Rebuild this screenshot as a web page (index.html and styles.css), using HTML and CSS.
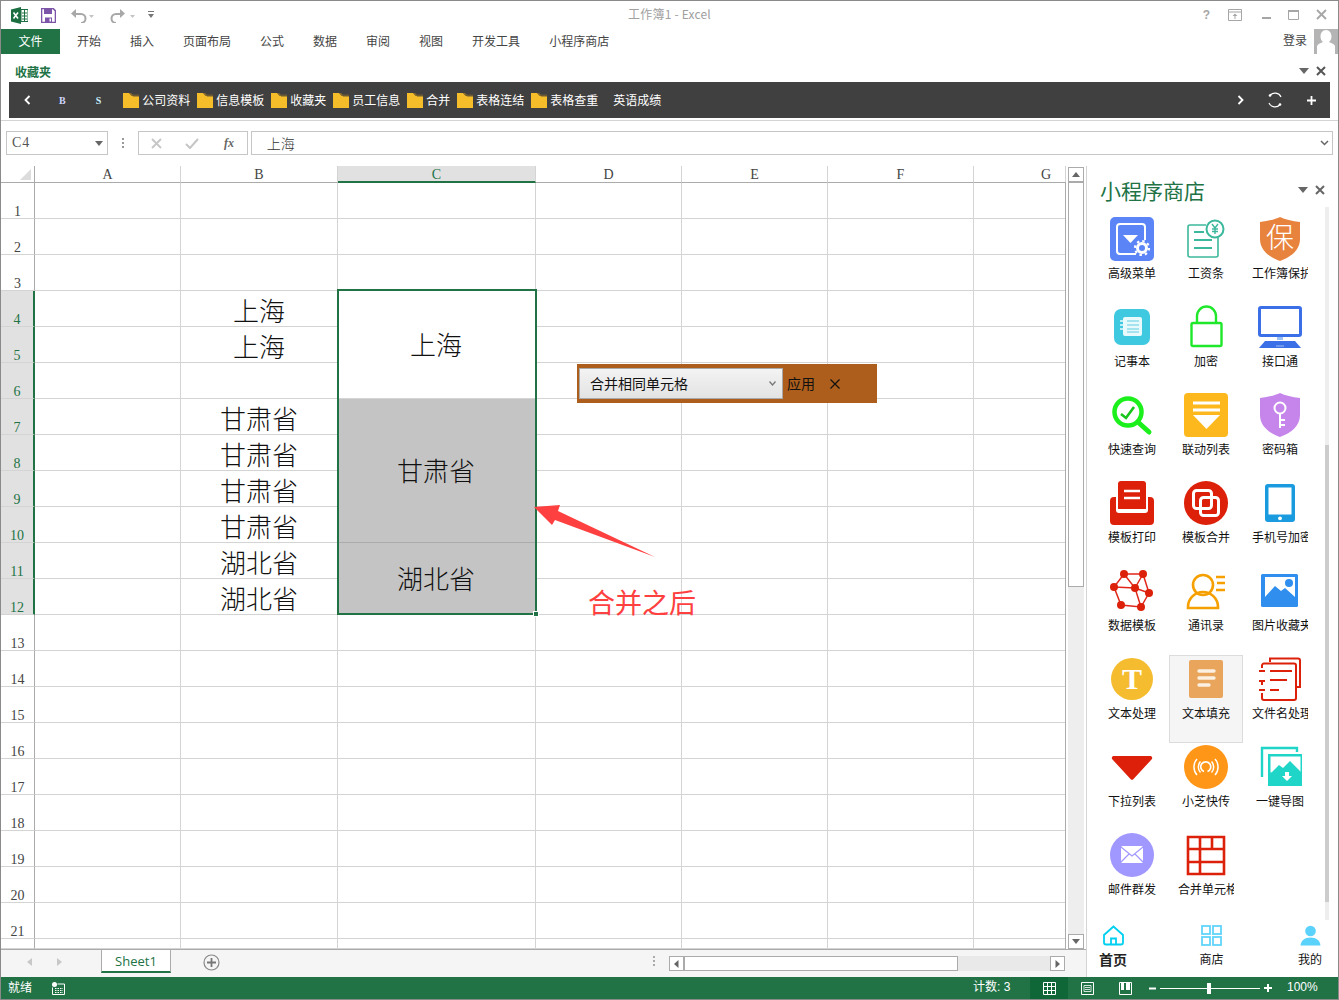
FILE: index.html
```html
<!DOCTYPE html>
<html lang="zh-CN">
<head>
<meta charset="utf-8">
<title>工作簿1 - Excel</title>
<link rel="stylesheet" href="styles.css">
</head>
<body>
<svg class="defs" width="0" height="0">
  <symbol id="folder" viewBox="0 0 16 15">
    <path d="M0 0h6l3 3h7v12H0z" fill="#f6bd2b"/>
    <path d="M6 0h2l3 3H9z" fill="#8a6d2a"/>
    <path d="M9 1.500h7V3.500H10z" fill="#6b5a34"/>
  </symbol>
</svg>
<div class="app">
  <header class="titlebar">
    <div class="qat">
      <svg class="qi-xl" width="17" height="17" viewBox="0 0 17 17"><path d="M0 2.500 10 0v17L0 14.500z" fill="#1d6f42"/><path d="M10 2.500h7v12h-7z" fill="#fff" stroke="#1d6f42"/><path d="M11 6h5M11 9h5M11 12h5M13.500 3v11" stroke="#1d6f42"/><path d="M2.500 5.500 7 11.500M7 5.500 2.500 11.500" stroke="#fff" stroke-width="1.600"/></svg>
      <svg class="qi-save" width="15" height="15" viewBox="0 0 15 15"><path d="M.5.500h11.500l2.500 2.500v11.500H.5z" fill="#fff" stroke="#7d55a8" stroke-width="1.600"/><path d="M3 1h8v5H3z" fill="#7d55a8"/><path d="M4 9.500h7v5H4z" fill="#7d55a8"/><path d="M8.500 10.500h1.500v3H8.500z" fill="#fff"/></svg>
      <svg class="qi-undo" width="26" height="15" viewBox="0 0 26 15"><path d="M3 6h7a4.500 4.500 0 0 1 0 9" fill="none" stroke="#a8a8a8" stroke-width="2"/><path d="M5 1v9L0 5.500z" fill="#a8a8a8"/><path d="M18 7h5l-2.500 3z" fill="#c4c4c4"/></svg>
      <svg class="qi-redo" width="26" height="15" viewBox="0 0 26 15"><path d="M12 6H6a4.500 4.500 0 0 0 0 9" fill="none" stroke="#a8a8a8" stroke-width="2"/><path d="M10 1v9l5-4.500z" fill="#a8a8a8"/><path d="M20 7h5l-2.500 3z" fill="#c4c4c4"/></svg>
      <svg class="qi-cust" width="6" height="8" viewBox="0 0 6 8"><path d="M0 0h6v1H0z" fill="#777"/><path d="M0 3h6L3 7z" fill="#777"/></svg>
    </div>
    <div class="doc-title">工作簿1 - Excel</div>
    <div class="winbtns">
      <span class="help">?</span>
      <svg class="qi-ribbon" width="14" height="12" viewBox="0 0 14 12"><path d="M.5.500h13v11H.5zM.5 3h13" fill="none" stroke="#a6a6a6"/><path d="M7 4.500 9.500 7h-5zM6.500 7h1v3h-1z" fill="#a6a6a6"/></svg>
      <svg width="9" height="12" viewBox="0 0 9 12"><path d="M0 8h9v2H0z" fill="#a6a6a6"/></svg>
      <svg width="11" height="12" viewBox="0 0 11 12"><path d="M.5 1.500h10v9H.5z" fill="none" stroke="#a6a6a6"/><path d="M0 1h11v2H0z" fill="#a6a6a6"/></svg>
      <svg width="11" height="11" viewBox="0 0 11 11"><path d="M1 1l9 9M10 1l-9 9" stroke="#a6a6a6" stroke-width="1.800"/></svg>
    </div>
  </header>

  <nav class="tabs">
    <div class="file-tab">文件</div>
    <ul class="tab-list">
      <li>开始</li><li>插入</li><li>页面布局</li><li>公式</li><li>数据</li><li>审阅</li><li>视图</li><li>开发工具</li><li>小程序商店</li>
    </ul>
    <div class="login">登录</div>
    <div class="avatar"><svg width="24" height="25" viewBox="0 0 24 25"><path d="M12 1c3.500 0 5.500 3 5.500 6.500 0 2.500-1 4.500-2.500 5.500 2 1 5 1.500 6 4v8H3v-8c1-2.500 4-3 6-4-1.500-1-2.500-3-2.500-5.500C6.500 4 8.500 1 12 1z" fill="#fff"/></svg></div>
  </nav>

  <section class="favorites">
    <div class="fav-head">
      <span class="fav-title">收藏夹</span>
      <span class="tri-down"></span>
      <svg class="x-ico" width="10" height="10" viewBox="0 0 10 10"><path d="M1 1l8 8M9 1L1 9" stroke="#555" stroke-width="2"/></svg>
    </div>
    <div class="fav-bar">
      <svg class="fav-back" width="7" height="10" viewBox="0 0 7 10"><path d="M5.500 1 1.500 5l4 4" fill="none" stroke="#fff" stroke-width="1.800"/></svg>
      <span class="fav-b">B</span>
      <span class="fav-s">S</span>
      <ul class="fav-items">
        <li><svg class="fld"><use href="#folder"/></svg><span>公司资料</span></li>
        <li><svg class="fld"><use href="#folder"/></svg><span>信息模板</span></li>
        <li><svg class="fld"><use href="#folder"/></svg><span>收藏夹</span></li>
        <li><svg class="fld"><use href="#folder"/></svg><span>员工信息</span></li>
        <li><svg class="fld"><use href="#folder"/></svg><span>合并</span></li>
        <li><svg class="fld"><use href="#folder"/></svg><span>表格连结</span></li>
        <li><svg class="fld"><use href="#folder"/></svg><span>表格查重</span></li>
        <li class="nofld"><span>英语成绩</span></li>
      </ul>
      <svg class="fav-next" width="7" height="10" viewBox="0 0 7 10"><path d="M1.500 1l4 4-4 4" fill="none" stroke="#fff" stroke-width="1.800"/></svg>
      <svg class="fav-refresh" width="16" height="16" viewBox="0 0 16 16"><path d="M3 3.500A6.500 6.500 0 0 1 14 5M13 12.500A6.500 6.500 0 0 1 2 11" fill="none" stroke="#fff" stroke-width="1.200"/><circle cx="3" cy="3.500" r="1.300" fill="#fff"/><circle cx="13" cy="12.500" r="1.300" fill="#fff"/></svg>
      <svg class="fav-plus" width="9" height="9" viewBox="0 0 9 9"><path d="M4.500 0v9M0 4.500h9" stroke="#fff" stroke-width="1.800"/></svg>
    </div>
  </section>

  <section class="formula">
    <div class="namebox"><span>C4</span><i class="tri-down small"></i></div>
    <div class="dots3"><b></b><b></b><b></b></div>
    <div class="fx-box">
      <svg width="11" height="11" viewBox="0 0 11 11"><path d="M1 1l9 9M10 1l-9 9" stroke="#c6c6c6" stroke-width="1.800"/></svg>
      <svg width="14" height="11" viewBox="0 0 14 11"><path d="M1 6l4 4 8-9" fill="none" stroke="#c6c6c6" stroke-width="2"/></svg>
      <span class="fx">fx</span>
    </div>
    <div class="fbar"><span>上海</span><svg width="9" height="6" viewBox="0 0 9 6"><path d="M1 1l3.500 3.500L8 1" fill="none" stroke="#666" stroke-width="1.500"/></svg></div>
  </section>

  <main class="main">
    <div class="sheet">
      <div class="sheet-top">
        <div class="grid-wrap">
          <div class="grid">
            <div class="corner"><svg width="11" height="11" viewBox="0 0 11 11"><path d="M11 0v11H0z" fill="#dcdcdc"/></svg></div>
            <div class="ch">A</div><div class="ch">B</div><div class="ch on">C</div><div class="ch">D</div><div class="ch">E</div><div class="ch">F</div><div class="ch ch-g">G</div>

            <div class="rh">1</div><i></i><i></i><i></i><i></i><i></i><i></i><i></i>
            <div class="rh">2</div><i></i><i></i><i></i><i></i><i></i><i></i><i></i>
            <div class="rh">3</div><i></i><i></i><i></i><i></i><i></i><i></i><i></i>

            <div class="rh on">4</div><i></i><div class="cell">上海</div><div class="merged m3">上海</div><i></i><i></i><i></i><i></i>
            <div class="rh on">5</div><i></i><div class="cell">上海</div><i></i><i></i><i></i><i></i>
            <div class="rh on">6</div><i></i><i></i><i></i><i></i><i></i><i></i>
            <div class="rh on">7</div><i></i><div class="cell">甘肃省</div><div class="merged m4 grey">甘肃省</div><i></i><i></i><i></i><i></i>
            <div class="rh on">8</div><i></i><div class="cell">甘肃省</div><i></i><i></i><i></i><i></i>
            <div class="rh on">9</div><i></i><div class="cell">甘肃省</div><i></i><i></i><i></i><i></i>
            <div class="rh on">10</div><i></i><div class="cell">甘肃省</div><i></i><i></i><i></i><i></i>
            <div class="rh on">11</div><i></i><div class="cell">湖北省</div><div class="merged m2 grey">湖北省</div><i></i><i></i><i></i><i></i>
            <div class="rh on">12</div><i></i><div class="cell">湖北省</div><i></i><i></i><i></i><i></i>

            <div class="rh">13</div><i></i><i></i><i></i><i></i><i></i><i></i><i></i>
            <div class="rh">14</div><i></i><i></i><i></i><i></i><i></i><i></i><i></i>
            <div class="rh">15</div><i></i><i></i><i></i><i></i><i></i><i></i><i></i>
            <div class="rh">16</div><i></i><i></i><i></i><i></i><i></i><i></i><i></i>
            <div class="rh">17</div><i></i><i></i><i></i><i></i><i></i><i></i><i></i>
            <div class="rh">18</div><i></i><i></i><i></i><i></i><i></i><i></i><i></i>
            <div class="rh">19</div><i></i><i></i><i></i><i></i><i></i><i></i><i></i>
            <div class="rh">20</div><i></i><i></i><i></i><i></i><i></i><i></i><i></i>
            <div class="rh">21</div><i></i><i></i><i></i><i></i><i></i><i></i><i></i>
            <div class="rh"></div><i></i><i></i><i></i><i></i><i></i><i></i><i></i>
          </div>

          <div class="selection"><span class="handle"></span></div>

          <div class="float-bar">
            <div class="float-select"><span>合并相同单元格</span><svg width="7" height="5" viewBox="0 0 7 5"><path d="M.5.500 3.500 4 6.500.500" fill="none" stroke="#777" stroke-width="1.300"/></svg></div>
            <span class="float-apply">应用</span>
            <svg class="float-x" width="10" height="10" viewBox="0 0 10 10"><path d="M.5.500l9 9M9.500.500l-9 9" stroke="#111" stroke-width="1.200"/></svg>
          </div>

          <svg class="arrow" width="130" height="60" viewBox="530 502 130 60"><path d="M534 507 560 505 558 511 655 557 555 520 552 525z" fill="#ff4040"/></svg>
          <div class="note">合并之后</div>
        </div>

        <div class="vscroll">
          <div class="sb-btn"><i class="tri-up"></i></div>
          <div class="sb-thumb"></div>
          <div class="sb-track"></div>
          <div class="sb-btn"><i class="tri-down small"></i></div>
        </div>
      </div>

      <div class="tabbar">
        <div class="sheet-nav">
          <svg width="6" height="8" viewBox="0 0 6 8"><path d="M5 0v8L0 4z" fill="#c8c8c8"/></svg>
          <svg width="6" height="8" viewBox="0 0 6 8"><path d="M1 0v8l5-4z" fill="#c8c8c8"/></svg>
        </div>
        <div class="sheet-tab">Sheet1</div>
        <svg class="add-sheet" width="17" height="17" viewBox="0 0 17 17"><circle cx="8.500" cy="8.500" r="7.500" fill="none" stroke="#888" stroke-width="1.200"/><path d="M8.500 4v9M4 8.500h9" stroke="#777" stroke-width="1.800"/></svg>
        <div class="vdots"><b></b><b></b><b></b></div>
        <div class="hscroll">
          <div class="hs-btn"><svg width="5" height="8" viewBox="0 0 5 8"><path d="M4.500 0v8L0 4z" fill="#666"/></svg></div>
          <div class="hs-thumb"></div>
          <div class="hs-track"></div>
          <div class="hs-btn"><svg width="5" height="8" viewBox="0 0 5 8"><path d="M.5 0v8L5 4z" fill="#666"/></svg></div>
        </div>
      </div>
    </div>

    <aside class="panel">
      <div class="panel-head">
        <h2>小程序商店</h2>
        <span class="tri-down"></span>
        <svg class="x-ico" width="10" height="10" viewBox="0 0 10 10"><path d="M1 1l8 8M9 1L1 9" stroke="#666" stroke-width="2"/></svg>
      </div>
      <div class="panel-body">
        <div class="apps">
          <div class="app-item"><svg class="ico" viewBox="0 0 44 44"><rect width="44" height="44" rx="5" fill="#5b85f7"/><path d="M26 37H10a3 3 0 0 1-3-3V10a3 3 0 0 1 3-3h22a3 3 0 0 1 3 3v13" fill="none" stroke="#fff" stroke-width="2"/><path d="M13 18h15l-7.500 8z" fill="#fff"/><circle cx="32" cy="31" r="4.500" fill="none" stroke="#fff" stroke-width="3"/><circle cx="32" cy="31" r="7" fill="none" stroke="#fff" stroke-width="2.200" stroke-dasharray="2.500 3"/></svg><span>高级菜单</span></div>
          <div class="app-item"><svg class="ico" viewBox="0 0 44 44"><path d="M22 8H6a2 2 0 0 0-2 2v28a2 2 0 0 0 2 2h26a2 2 0 0 0 2-2V21" fill="none" stroke="#3cb89c" stroke-width="1.600"/><path d="M10 15h10M10 23h18M10 31h18" stroke="#3cb89c" stroke-width="2"/><circle cx="31" cy="12" r="8.500" fill="#fff" stroke="#3cb89c" stroke-width="2"/><path d="M28 7l3 4 3-4M31 11v6M28 12h6M28 14.500h6" fill="none" stroke="#3cb89c" stroke-width="1.400"/></svg><span>工资条</span></div>
          <div class="app-item"><svg class="ico" viewBox="0 0 44 44"><path d="M22 0c5 2.500 12 4 20 5v17c0 11-9 18-20 22C11 40 2 33 2 22V5c8-1 15-2.500 20-5z" fill="#e8833e"/><text x="22" y="31" class="ico-txt">保</text></svg><span>工作簿保护</span></div>

          <div class="app-item"><svg class="ico" viewBox="0 0 44 44"><rect x="4" y="4" width="36" height="36" rx="7" fill="#3fc9e0"/><rect x="13" y="12" width="19" height="19" rx="2" fill="#e9fafd"/><path d="M10 16h3M10 20h3M10 24h3" stroke="#e9fafd" stroke-width="1.600"/><path d="M17 16h12M17 20h12M17 24h12M17 27h12" stroke="#8fdbea" stroke-width="1.600"/></svg><span>记事本</span></div>
          <div class="app-item"><svg class="ico" viewBox="0 0 44 44"><rect x="7.500" y="18" width="30" height="23" rx="1.500" fill="#fff" stroke="#1fe82a" stroke-width="2.400"/><path d="M13 18v-7a9.500 9.500 0 0 1 19 0v7" fill="none" stroke="#1fe82a" stroke-width="2.400"/></svg><span>加密</span></div>
          <div class="app-item"><svg class="ico" viewBox="0 0 44 44"><rect x="1.500" y="2.500" width="41" height="28" rx="1.500" fill="#fff" stroke="#3a6fe8" stroke-width="3"/><path d="M19 32h6v3h-6z" fill="#9fc0f2"/><path d="M7 36h30l6 7H1z" fill="#3a6fe8"/><path d="M18 41h8" stroke="#9fc0f2"/></svg><span>接口通</span></div>

          <div class="app-item"><svg class="ico" viewBox="0 0 44 44"><circle cx="18" cy="19" r="13.500" fill="none" stroke="#1cf01c" stroke-width="4.500"/><path d="M29 30l10 9" stroke="#1cf01c" stroke-width="5" stroke-linecap="round"/><path d="M11 21l5 4 8-11" fill="none" stroke="#19c41c" stroke-width="2.600"/></svg><span>快速查询</span></div>
          <div class="app-item"><svg class="ico" viewBox="0 0 44 44"><rect width="44" height="44" rx="4" fill="#fdb81e"/><path d="M9 10h27M9 17h27" stroke="#fff" stroke-width="3"/><path d="M9 22h27L22.500 36z" fill="#fff"/></svg><span>联动列表</span></div>
          <div class="app-item"><svg class="ico" viewBox="0 0 44 44"><path d="M22 0c5 2.500 12 4 20 5v17c0 11-9 18-20 22C11 40 2 33 2 22V5c8-1 15-2.500 20-5z" fill="#c685ea"/><circle cx="22" cy="15" r="5.500" fill="none" stroke="#fff" stroke-width="2"/><path d="M22 20v15M22 27h5M22 32h5" stroke="#fff" stroke-width="2"/></svg><span>密码箱</span></div>

          <div class="app-item"><svg class="ico" viewBox="0 0 44 44"><path d="M11 0h22a3 3 0 0 1 3 3v25H8V3a3 3 0 0 1 3-3z" fill="#dc2009"/><path d="M0 20a4 4 0 0 1 4-4h2v13a3 3 0 0 0 3 3h26a3 3 0 0 0 3-3V16h2a4 4 0 0 1 4 4v20a4 4 0 0 1-4 4H4a4 4 0 0 1-4-4z" fill="#dc2009"/><path d="M14 10h16M14 17h16" stroke="#fff" stroke-width="2.400"/></svg><span>模板打印</span></div>
          <div class="app-item"><svg class="ico" viewBox="0 0 44 44"><circle cx="22" cy="22" r="22" fill="#dc2009"/><rect x="9.500" y="9.500" width="18" height="18" rx="3" fill="none" stroke="#fff" stroke-width="3"/><rect x="16.500" y="16.500" width="18" height="18" rx="3" fill="none" stroke="#fff" stroke-width="3"/></svg><span>模板合并</span></div>
          <div class="app-item"><svg class="ico" viewBox="0 0 44 44"><rect x="7" y="3" width="30" height="38" rx="3" fill="#1a9be0"/><rect x="10.500" y="6.500" width="23" height="27" fill="#fff"/><circle cx="22" cy="37.300" r="1.900" fill="#fff"/></svg><span>手机号加密</span></div>

          <div class="app-item"><svg class="ico" viewBox="0 0 44 44"><path d="M14 5 33 5 39 24 31 38 11 36 4 18zM4 18 25 19 39 24M14 5 25 19 31 38M33 5 25 19" fill="none" stroke="#e0271a" stroke-width="1.500"/><g fill="#dc2009"><circle cx="14" cy="5" r="4"/><circle cx="33" cy="5" r="4"/><circle cx="4" cy="18" r="4"/><circle cx="25" cy="19" r="4"/><circle cx="39" cy="24" r="4"/><circle cx="11" cy="36" r="4"/><circle cx="31" cy="38" r="4"/></g></svg><span>数据模板</span></div>
          <div class="app-item"><svg class="ico" viewBox="0 0 44 44"><circle cx="19" cy="16" r="10" fill="none" stroke="#f5a000" stroke-width="2.600"/><path d="M4 39v-1a15 15 0 0 1 30 0v1z" fill="none" stroke="#f5a000" stroke-width="2.600"/><path d="M32 8h9M33 14h8M32 21h9" stroke="#f5a000" stroke-width="2.600"/></svg><span>通讯录</span></div>
          <div class="app-item"><svg class="ico" viewBox="0 0 44 44"><rect x="3" y="5" width="37" height="33" rx="1.500" fill="#2f8eee"/><path d="M7 8h30v20L27 19l-4 3-6-5L7 28z" fill="#fff"/><circle cx="31" cy="14" r="4" fill="#2f8eee"/></svg><span>图片收藏夹</span></div>

          <div class="app-item"><svg class="ico" viewBox="0 0 44 44"><circle cx="22" cy="22" r="21" fill="#f4bc2e"/><text x="22" y="32" class="ico-t">T</text></svg><span>文本处理</span></div>
          <div class="app-item selected"><svg class="ico" viewBox="0 0 44 44"><rect x="5" y="3" width="34" height="38" rx="2" fill="#e8a55b"/><path d="M15 14h15M15 21h15M15 28h10" stroke="#fbf0e2" stroke-width="3.400" stroke-linecap="round"/></svg><span>文本填充</span></div>
          <div class="app-item"><svg class="ico" viewBox="0 0 44 44"><path d="M12 5V1.500h28a2 2 0 0 1 2 2V30h-4" fill="none" stroke="#dc2009" stroke-width="2"/><path d="M4 11V8.500a2 2 0 0 1 2-2h30a2 2 0 0 1 2 2V41a2 2 0 0 1-2 2H6a2 2 0 0 1-2-2V36M4 24v4" fill="none" stroke="#dc2009" stroke-width="2"/><path d="M1 14h6M1 24h6M1 33h6" stroke="#dc2009" stroke-width="2"/><path d="M12 14h22M12 23h17M12 33h9" stroke="#dc2009" stroke-width="2.200"/></svg><span>文件名处理</span></div>

          <div class="app-item"><svg class="ico" viewBox="0 0 44 44"><path d="M4 11h36a2 2 0 0 1 1.500 3.500L23.500 34a2 2 0 0 1-3 0L2.500 14.500A2 2 0 0 1 4 11z" fill="#dc2009"/></svg><span>下拉列表</span></div>
          <div class="app-item"><svg class="ico" viewBox="0 0 44 44"><circle cx="22" cy="22" r="22" fill="#ff9617"/><path d="M23.500 26.500a5 5 0 1 0-3.500 0" fill="none" stroke="#fff" stroke-width="1.700"/><path d="M13 14a12 12 0 0 0 0 16M31 14a12 12 0 0 1 0 16M16.500 16.500a8 8 0 0 0 0 11M27.500 16.500a8 8 0 0 1 0 11" fill="none" stroke="#fff" stroke-width="1.500"/></svg><span>小芝快传</span></div>
          <div class="app-item"><svg class="ico" viewBox="0 0 44 44"><path d="M4 32V3h35v4" fill="none" stroke="#1fd5c8" stroke-width="2.400"/><rect x="10" y="9" width="35" height="32" fill="#1fd5c8"/><rect x="12.500" y="11.500" width="30" height="16" fill="#fff"/><path d="M12 29l9-9 4 3 7-7 11 11v4H12z" fill="#1fd5c8"/><path d="M27 27h4v4h3l-5 5-5-5h3z" fill="#fff"/></svg><span>一键导图</span></div>

          <div class="app-item"><svg class="ico" viewBox="0 0 44 44"><circle cx="22" cy="22" r="22" fill="#a097ff"/><rect x="11" y="13" width="22" height="17" rx="1.500" fill="#fff"/><path d="M11 14l11 9 11-9M11 29l8-8M33 29l-8-8" fill="none" stroke="#a097ff" stroke-width="1.200"/></svg><span>邮件群发</span></div>
          <div class="app-item"><svg class="ico" viewBox="0 0 44 44"><path d="M4 4h36v37H4zM4 16h36M4 29h36M16 4v37M28 4v12" fill="none" stroke="#dc2009" stroke-width="2.600"/></svg><span>合并单元格</span></div>
        </div>
        <div class="panel-scroll"><div class="panel-thumb"></div></div>
      </div>
      <div class="panel-nav">
        <div class="nav-item active"><svg width="21" height="21" viewBox="0 0 21 21"><path d="M10.500 1.500 1 10v7.500A2 2 0 0 0 3 19.500h15a2 2 0 0 0 2-2V10z" fill="none" stroke="#00d0f0" stroke-width="1.800"/><path d="M8 19.500V13.500h5v6" fill="none" stroke="#00d0f0" stroke-width="1.800"/></svg><span>首页</span></div>
        <div class="nav-item"><svg width="21" height="21" viewBox="0 0 21 21"><g fill="none" stroke="#60d4fb" stroke-width="1.800"><rect x="1" y="1" width="8" height="8"/><rect x="12" y="1" width="8" height="8"/><rect x="1" y="12" width="8" height="8"/><rect x="12" y="12" width="8" height="8"/></g></svg><span>商店</span></div>
        <div class="nav-item"><svg width="21" height="21" viewBox="0 0 21 21"><circle cx="10.500" cy="6" r="5.300" fill="#5ad2fb"/><path d="M.500 20.500c.5-5 4-8 10-8s9.500 3 10 8z" fill="#5ad2fb"/></svg><span>我的</span></div>
      </div>
    </aside>
  </main>

  <footer class="status">
    <span class="st-ready">就绪</span>
    <svg class="st-macro" width="13" height="13" viewBox="0 0 13 13"><circle cx="2.500" cy="2.500" r="2.500" fill="#fff"/><path d="M5.500 2H12.500V12.500H.5V5.500" fill="none" stroke="#fff"/><path d="M3 6.500h8M3 8.500h8M3 10.500h8" stroke="#fff" stroke-dasharray="1.500 1"/></svg>
    <span class="st-count">计数: 3</span>
    <div class="view-btn on"><svg width="13" height="13" viewBox="0 0 13 13"><path d="M.5.500h12v12H.5zM4.500.500v12M8.500.500v12M.5 4.500h12M.5 8.500h12" fill="none" stroke="#fff"/></svg></div>
    <div class="view-btn"><svg width="13" height="13" viewBox="0 0 13 13"><path d="M.5.500h12v12H.5z" fill="none" stroke="#fff"/><path d="M3 3.500h7v6H3zM4 5.500h5M4 7.500h5" fill="none" stroke="#fff" stroke-width=".8"/></svg></div>
    <div class="view-btn"><svg width="13" height="13" viewBox="0 0 13 13"><path d="M.5.500h12v12H.5z" fill="none" stroke="#fff"/><path d="M2 1h3v7H2zM7 1h4v7H7z" fill="#fff"/></svg></div>
    <div class="zoom">
      <svg width="7" height="7" viewBox="0 0 7 7"><path d="M0 2.500h7v2H0z" fill="#fff"/></svg>
      <div class="slider"><b></b></div>
      <svg width="8" height="8" viewBox="0 0 8 8"><path d="M3 0h2v3h3v2H5v3H3V5H0V3h3z" fill="#fff"/></svg>
      <span>100%</span>
    </div>
  </footer>
</div>
</body>
</html>
```
FILE: styles.css
```css
* { box-sizing: border-box; }
html, body { margin: 0; padding: 0; background: #fff; }
body { font-family: "Noto Sans CJK SC", "Liberation Sans", sans-serif; font-size: 12px; color: #444; overflow: hidden; }
.defs { position: absolute; }
.app { width: 1339px; height: 1000px; border: 1px solid #8a8a8a; display: flex; flex-direction: column; overflow: hidden; position: relative; }

/* title bar */
.titlebar { height: 28px; display: grid; grid-template-columns: 1fr auto 1fr; align-items: center; flex: none; }
.qat { display: flex; align-items: center; padding-left: 10px; }
.qi-save { margin-left: 13px; }
.qi-undo { margin-left: 15px; }
.qi-redo { margin-left: 13px; }
.qi-cust { margin-left: 12px; }
.doc-title { color: #a0a0a0; font-size: 12px; line-height: 16px; margin-top: -2px; letter-spacing: .2px; }
.winbtns { display: flex; align-items: center; justify-content: flex-end; padding-right: 11px; gap: 17px; color: #a6a6a6; margin-top: -1px; }
.help { font-family: "Liberation Sans", sans-serif; font-weight: 700; font-size: 12px; line-height: 14px; margin-right: 1px; }
.qi-ribbon { margin-right: 3px; }

/* tabs */
.tabs { height: 25px; display: flex; align-items: center; flex: none; }
.file-tab { width: 59px; height: 25px; background: #217346; color: #fff; line-height: 24px; text-align: center; }
.tab-list { list-style: none; display: flex; margin: 0; padding: 0 0 2px 17px; gap: 29px; color: #444; flex: 1; }
.login { color: #444; margin-right: 7px; margin-top: -5px; }
.avatar { width: 24px; height: 25px; background: #b4b4b4; overflow: hidden; }
.avatar svg { display: block; }

/* favorites */
.favorites { height: 67px; flex: none; border-bottom: 1px solid #d4d4d4; }
.fav-head { height: 28px; display: flex; align-items: center; padding: 6px 12px 0 14px; }
.fav-title { color: #217346; font-weight: 700; font-size: 12px; flex: 1; }
.tri-down { width: 0; height: 0; border-left: 5px solid transparent; border-right: 5px solid transparent; border-top: 6px solid #666; margin-right: 7px; display: block; }
.tri-down.small { border-left-width: 4px; border-right-width: 4px; border-top-width: 5px; margin: 0; }
.x-ico { display: block; }
.fav-bar { margin-left: 8px; width: 1321px; height: 36px; background: #404040; color: #fff; display: flex; align-items: center; padding-left: 15px; }
.fav-b, .fav-s { font-family: "Liberation Serif", serif; font-weight: 700; font-size: 10px; }
.fav-b { margin-left: 28px; color: #cfd6ff; }
.fav-s { margin-left: 30px; color: #c9efff; }
.fav-items { list-style: none; display: flex; margin: 0 0 0 22px; padding: 0; gap: 7px; flex: 1; }
.fav-items li { display: flex; align-items: center; gap: 3px; white-space: nowrap; }
.fav-items li span { margin-top: -2px; }
.fav-items .nofld { margin-left: 8px; }
.fld { width: 16px; height: 15px; display: block; }
.fav-next { margin-right: 23px; }
.fav-refresh { margin-right: 24px; }
.fav-plus { margin-right: 14px; }

/* formula bar */
.formula { height: 45px; flex: none; display: flex; padding: 10px 5px 11px 5px; align-items: stretch; }
.namebox { width: 102px; border: 1px solid #c6c6c6; display: flex; align-items: center; justify-content: space-between; padding: 0 4px 0 5px; font-family: "Liberation Serif", serif; font-size: 14px; letter-spacing: 1px; color: #555; }
.dots3 { width: 30px; display: flex; flex-direction: column; align-items: center; justify-content: center; gap: 2px; }
.dots3 b { width: 2px; height: 2px; background: #999; display: block; }
.fx-box { width: 110px; border: 1px solid #c6c6c6; display: flex; align-items: center; padding-left: 12px; gap: 23px; }
.fx { font-family: "Liberation Serif", serif; font-style: italic; font-weight: 700; font-size: 12px; color: #666; margin-left: 2px; }
.fbar { width: 1083px; margin-left: 3px; border: 1px solid #c6c6c6; display: flex; align-items: center; justify-content: space-between; padding: 0 3px 0 15px; font-size: 14px; color: #333; font-weight: 300; }

/* main */
.main { height: 811px; flex: none; display: flex; }
.sheet { width: 1086px; border-right: 1px solid #d4d4d4; display: flex; flex-direction: column; }
.sheet-top { height: 783px; display: flex; }
.grid-wrap { width: 1065px; position: relative; }
.grid-wrap::after { content: ""; position: absolute; right: 0; top: 16px; bottom: 0; width: 1px; background: #ababab; }
.grid { display: grid; grid-template-columns: 34px 146px 157px 198px 146px 146px 146px 92px; grid-template-rows: 17px repeat(21, 36px) 10px; height: 783px; }
.grid > i { display: block; border-right: 1px solid #d4d4d4; border-bottom: 1px solid #d4d4d4; }
.corner { border-right: 1px solid #ababab; border-bottom: 1px solid #ababab; display: flex; align-items: flex-end; justify-content: flex-end; padding: 0 3px 2px 0; }
.corner svg { display: block; }
.ch { border-right: 1px solid #d4d4d4; border-bottom: 1px solid #ababab; font-family: "Liberation Serif", serif; font-size: 14px; line-height: 18px; text-align: center; color: #444; }
.ch.on { background: #e1e1e1; border-bottom: 2px solid #217346; color: #217346; }
.ch-g { text-align: right; padding-right: 14px; }
.rh { border-right: 1px solid #ababab; border-bottom: 1px solid #d4d4d4; font-family: "Liberation Serif", serif; font-size: 14px; line-height: 13px; display: flex; align-items: flex-end; justify-content: center; color: #444; }
.rh.on { background: #e1e1e1; color: #217346; border-right: 2px solid #217346; }
.cell { border-right: 1px solid #d4d4d4; border-bottom: 1px solid #d4d4d4; font-size: 26px; font-weight: 300; color: #111; display: flex; align-items: center; justify-content: center; line-height: 30px; padding-top: 2px; }
.merged { border-right: 1px solid #d4d4d4; border-bottom: 1px solid #d4d4d4; font-size: 26px; font-weight: 300; color: #111; display: flex; align-items: center; justify-content: center; padding-bottom: 2px; padding-right: 1px; }
.m2 { grid-row: span 2; }
.m3 { grid-row: span 3; }
.m4 { grid-row: span 4; }
.grey { background: #c4c4c4; border-bottom-color: #ababab; }

.selection { position: absolute; left: 336px; top: 123px; width: 200px; height: 326px; border: 2px solid #217346; }
.handle { position: absolute; right: -4px; bottom: -4px; background: #217346; border: 1px solid #fff; box-sizing: content-box; width: 4px; height: 4px; }
.float-bar { position: absolute; left: 576px; top: 198px; width: 300px; height: 39px; background: #ad5e1c; display: flex; align-items: center; padding-left: 2px; }
.float-select { width: 204px; height: 31px; border: 1px solid #a9a9a9; background: linear-gradient(#f3f3f3, #e3e3e3); display: flex; align-items: center; justify-content: space-between; padding: 0 6px 0 10px; font-size: 14px; color: #111; margin-top: -1px; }
.float-apply { font-size: 14px; color: #111; margin-left: 4px; margin-top: -1px; }
.float-x { margin-left: 15px; }
.arrow { position: absolute; left: 529px; top: 336px; }
.note { position: absolute; left: 587px; top: 418px; font-size: 27px; line-height: 36px; color: #ff4040; font-weight: 400; white-space: nowrap; }

.vscroll { width: 20px; display: flex; flex-direction: column; padding: 1px 2px 0 2px; }
.sb-btn { height: 15px; border: 1px solid #ababab; background: #fff; display: flex; align-items: center; justify-content: center; flex: none; }
.tri-up { width: 0; height: 0; border-left: 4px solid transparent; border-right: 4px solid transparent; border-bottom: 5px solid #666; display: block; }
.sb-thumb { height: 405px; border: 1px solid #ababab; background: #fff; flex: none; }
.sb-track { flex: 1; background: #eee; }

/* sheet tabs */
.tabbar { height: 28px; background: #f5f5f5; border-top: 1px solid #ababab; display: flex; align-items: flex-start; }
.sheet-nav { width: 100px; height: 24px; display: flex; align-items: center; padding-left: 26px; gap: 23px; }
.sheet-tab { width: 70px; height: 24px; margin-top: -1px; background: #fff; border: 1px solid #ababab; border-bottom: 2px solid #217346; color: #217346; font-family: "Open Sans", "Liberation Sans", sans-serif; font-size: 13px; text-align: center; line-height: 22px; }
.add-sheet { margin: 4px 0 0 32px; flex: none; }
.vdots { margin: 6px 0 0 433px; display: flex; flex-direction: column; gap: 2px; width: 2px; flex: none; }
.vdots b { width: 2px; height: 2px; background: #aaa; display: block; }
.hscroll { margin: 6px 0 0 14px; width: 396px; height: 15px; display: flex; background: #e9e9e9; flex: none; }
.hs-btn { width: 15px; border: 1px solid #ababab; background: #fff; display: flex; align-items: center; justify-content: center; flex: none; }
.hs-thumb { width: 274px; background: #fff; border: 1px solid #ababab; flex: none; }
.hs-track { flex: 1; }

/* side panel */
.panel { width: 251px; display: flex; flex-direction: column; }
.panel-head { height: 41px; display: flex; align-items: center; padding: 6px 13px 0 13px; flex: none; }
.panel-head h2 { margin: 0; flex: 1; font-size: 21px; font-weight: 400; color: #217346; line-height: 28px; }
.panel-body { height: 713px; display: flex; flex: none; }
.apps { width: 238px; padding: 8px 8px 0 8px; display: grid; grid-template-columns: repeat(3, 74px); grid-auto-rows: 88px; }
.app-item { display: flex; flex-direction: column; align-items: center; border: 1px solid transparent; padding-top: 1px; color: #111; }
.app-item span { display: block; width: 56px; margin-top: 2px; white-space: nowrap; overflow: hidden; text-align: center; line-height: 20px; font-size: 12px; }
.app-item.selected { background: #f5f5f5; border-color: #dcdcdc; }
.ico { width: 44px; height: 44px; display: block; flex: none; }
.ico-txt { font-size: 28px; fill: #fff; text-anchor: middle; font-weight: 300; }
.ico-t { font-family: "Liberation Serif", serif; font-size: 30px; font-weight: 700; fill: #fff; text-anchor: middle; }
.panel-scroll { width: 4px; background: #eee; flex: none; }
.panel-thumb { margin-top: 238px; height: 457px; background: #ccc; }
.panel-nav { flex: 1; display: flex; justify-content: space-between; padding: 5px 8px 0 6px; }
.nav-item { width: 40px; display: flex; flex-direction: column; align-items: center; color: #111; font-size: 12px; }
.nav-item svg { display: block; }
.nav-item span { margin-top: 5px; line-height: 16px; }
.nav-item.active span { font-size: 14px; font-weight: 700; margin-top: 4px; line-height: 18px; color: #222; }

/* status */
.status { height: 22px; flex: none; background: #217346; color: #fff; display: flex; align-items: center; padding-left: 7px; font-size: 12px; line-height: 16px; }
.st-ready { width: 44px; margin-top: -3px; }
.st-macro { display: block; }
.st-count { margin-left: 908px; width: 57px; margin-top: -2px; font-family: "Liberation Sans", "Noto Sans CJK SC", sans-serif; }
.view-btn { width: 38px; height: 22px; display: flex; align-items: center; justify-content: center; flex: none; }
.view-btn.on { background: #0f6636; }
.zoom { display: flex; align-items: center; margin-left: 5px; gap: 4px; }
.zoom span { margin-left: 11px; margin-top: -2px; font-family: "Liberation Sans", sans-serif; }
.slider { width: 100px; height: 1px; background: #fff; position: relative; }
.slider b { position: absolute; left: 47px; top: -5px; width: 4px; height: 11px; background: #fff; }
```
